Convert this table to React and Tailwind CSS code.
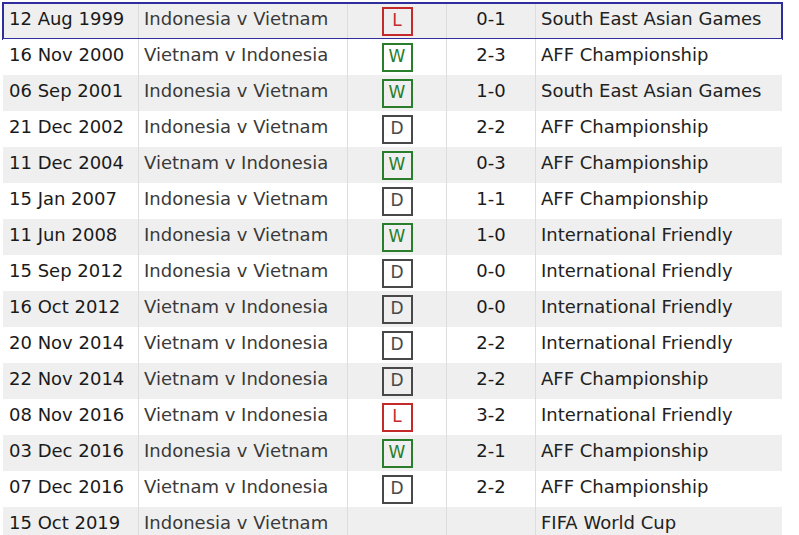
import React from "react"

const rows = [
    ["12 Aug 1999", "Indonesia v Vietnam", "L", "0-1", "South East Asian Games"],
    ["16 Nov 2000", "Vietnam v Indonesia", "W", "2-3", "AFF Championship"],
    ["06 Sep 2001", "Indonesia v Vietnam", "W", "1-0", "South East Asian Games"],
    ["21 Dec 2002", "Indonesia v Vietnam", "D", "2-2", "AFF Championship"],
    ["11 Dec 2004", "Vietnam v Indonesia", "W", "0-3", "AFF Championship"],
    ["15 Jan 2007", "Indonesia v Vietnam", "D", "1-1", "AFF Championship"],
    ["11 Jun 2008", "Indonesia v Vietnam", "W", "1-0", "International Friendly"],
    ["15 Sep 2012", "Indonesia v Vietnam", "D", "0-0", "International Friendly"],
    ["16 Oct 2012", "Vietnam v Indonesia", "D", "0-0", "International Friendly"],
    ["20 Nov 2014", "Vietnam v Indonesia", "D", "2-2", "International Friendly"],
    ["22 Nov 2014", "Vietnam v Indonesia", "D", "2-2", "AFF Championship"],
    ["08 Nov 2016", "Vietnam v Indonesia", "L", "3-2", "International Friendly"],
    ["03 Dec 2016", "Indonesia v Vietnam", "W", "2-1", "AFF Championship"],
    ["07 Dec 2016", "Vietnam v Indonesia", "D", "2-2", "AFF Championship"],
    ["15 Oct 2019", "Indonesia v Vietnam", "", "", "FIFA World Cup"],
]

const badgeStyles = {
    L: "border-[#c42a2a] text-[#c42a2a]",
    W: "border-[#2a7d2a] text-[#2a7d2a]",
    D: "border-[#484848] text-[#484848]",
}

function Badge({ r }) {
    if (!r) return null
    return (
        <div className={"w-[31px] h-[29px] border-2 flex items-center justify-center text-[17px] leading-none pb-[1px] " + badgeStyles[r]}>
            {r}
        </div>
    )
}

export default function App() {
    return (
        <div className="bg-white w-[799px] h-[535px] overflow-hidden pt-[3px] pl-[3px]" style={{ fontFamily: '"DejaVu Sans", Verdana, sans-serif' }}>
            <div className="w-[779px]">
                {rows.map((row, i) => (
                    <div key={i} className={"relative grid grid-cols-[135px_209px_99px_89px_247px] h-[36px] text-[18px] leading-none " + (i % 2 === 0 ? "bg-[#efefef]" : "bg-white")}>
                        <div className="flex items-center pl-[6px] pb-[4px] text-[#1a1a1a] whitespace-nowrap">{row[0]}</div>
                        <div className="flex items-center pl-[5px] pb-[4px] border-l border-[#dddddd] text-[#3a3a3a] whitespace-nowrap">{row[1]}</div>
                        <div className="flex items-center justify-center border-l border-[#dddddd]">
                            <Badge r={row[2]} />
                        </div>
                        <div className="flex items-center justify-center pb-[4px] border-l border-[#dddddd] text-[#1a1a1a]">{row[3]}</div>
                        <div className="flex items-center pl-[5px] pb-[4px] border-l border-[#dddddd] text-[#222222] whitespace-nowrap">{row[4]}</div>
                        {i === 0 && (
                            <div className="absolute -left-px -top-px -right-px -bottom-px border-2 border-[#2e2e9c]" />
                        )}
                    </div>
                ))}
            </div>
        </div>
    )
}
